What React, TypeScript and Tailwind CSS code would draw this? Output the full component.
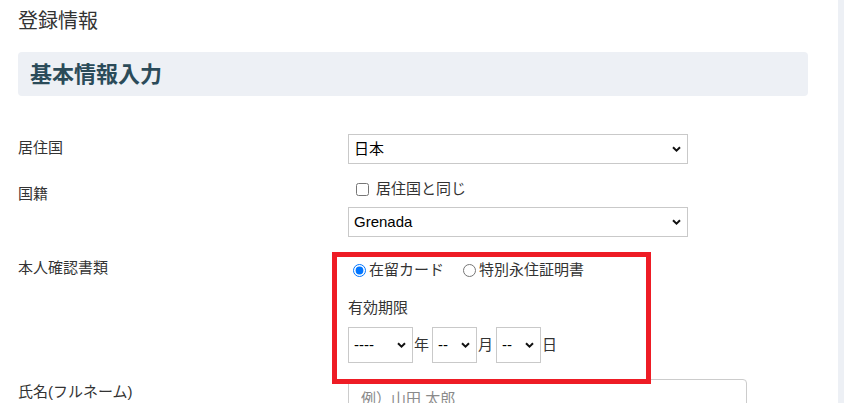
const Chevron = () => (
  <svg
    className="pointer-events-none absolute right-[7px] top-1/2 -translate-y-1/2"
    width="9"
    height="6"
    viewBox="0 0 9 6"
    fill="none"
  >
    <path d="M1 1.2 L4.5 4.6 L8 1.2" stroke="#111" strokeWidth="2" />
  </svg>
);

const Select = ({ value, className }: { value: string; className: string }) => (
  <div className={`relative ${className}`}>
    <select
      defaultValue={value}
      className="h-full w-full appearance-none border border-[#c9c9c9] bg-white pl-[5px] text-[15px] text-black outline-none"
    >
      <option value={value}>{value}</option>
    </select>
    <Chevron />
  </div>
);

export default function App() {
  return (
    <div className="relative flex h-[403px] w-full overflow-hidden bg-white font-['Liberation_Sans','Noto_Sans_CJK_JP',sans-serif] text-[#333]">
      <div className="flex-1 pl-[18px] pr-[30px]">
        <h1 className="mt-[7px] text-[20px] leading-[28px] text-[#333]">登録情報</h1>

        <div className="mt-[17px] flex h-[44px] items-center rounded-[4px] bg-[#edf0f5] px-3">
          <h2 className="text-[22px] font-bold text-[#2b4b59]">基本情報入力</h2>
        </div>

        {/* 居住国 */}
        <div className="mt-[38px] flex">
          <div className="w-[330px] pt-[4px] text-[15px] leading-[20px]">居住国</div>
          <Select value="日本" className="h-[30px] w-[340px]" />
        </div>

        {/* 国籍 */}
        <div className="mt-[14px] flex">
          <div className="w-[330px] pt-[6px] text-[15px] leading-[20px]">国籍</div>
          <div className="flex flex-col">
            <label className="flex h-[22px] items-center text-[15px]">
              <input type="checkbox" className="ml-[8px] h-[13px] w-[13px]" />
              <span className="ml-[7px]">居住国と同じ</span>
            </label>
            <Select value="Grenada" className="mt-[7px] h-[30px] w-[340px]" />
          </div>
        </div>

        {/* 本人確認書類 */}
        <div className="mt-[21px] flex">
          <div className="w-[330px] text-[15px] leading-[20px]">本人確認書類</div>
          <div className="flex flex-col">
            <div className="flex h-[24px] items-center text-[15px]">
              <label className="flex items-center">
                <input
                  type="radio"
                  name="doc"
                  defaultChecked
                  className="ml-[5px] mr-[3px] h-[13px] w-[13px]"
                />
                <span>在留カード</span>
              </label>
              <label className="ml-[14px] flex items-center">
                <input type="radio" name="doc" className="ml-[5px] mr-[3px] h-[13px] w-[13px]" />
                <span>特別永住証明書</span>
              </label>
            </div>
            <div className="mt-[16px] text-[15px] leading-[20px]">有効期限</div>
            <div className="mt-[9px] flex items-center text-[15px]">
              <Select value="----" className="h-[36px] w-[65px]" />
              <span className="ml-[1px]">年</span>
              <Select value="--" className="ml-[3px] h-[36px] w-[45px]" />
              <span className="ml-[1px]">月</span>
              <Select value="--" className="ml-[3px] h-[36px] w-[45px]" />
              <span className="ml-[1px]">日</span>
            </div>
          </div>
        </div>

        {/* 氏名 */}
        <div className="mt-[16px] flex">
          <div className="w-[330px] pt-[3px] text-[15px] leading-[20px]">氏名(フルネーム)</div>
          <input
            type="text"
            placeholder="例）山田 太郎"
            className="h-[38px] w-[399px] rounded-[4px] border border-[#cccccc] bg-white px-3 text-[15px] outline-none placeholder:text-[#8a8a8a]"
          />
        </div>
      </div>

      <div className="w-[6px] bg-[#edf0f5]" />

      {/* annotation frame */}
      <div className="pointer-events-none absolute left-[332px] top-[252px] h-[132px] w-[319px] border-[5px] border-[#ee1c25]" />
    </div>
  );
}
